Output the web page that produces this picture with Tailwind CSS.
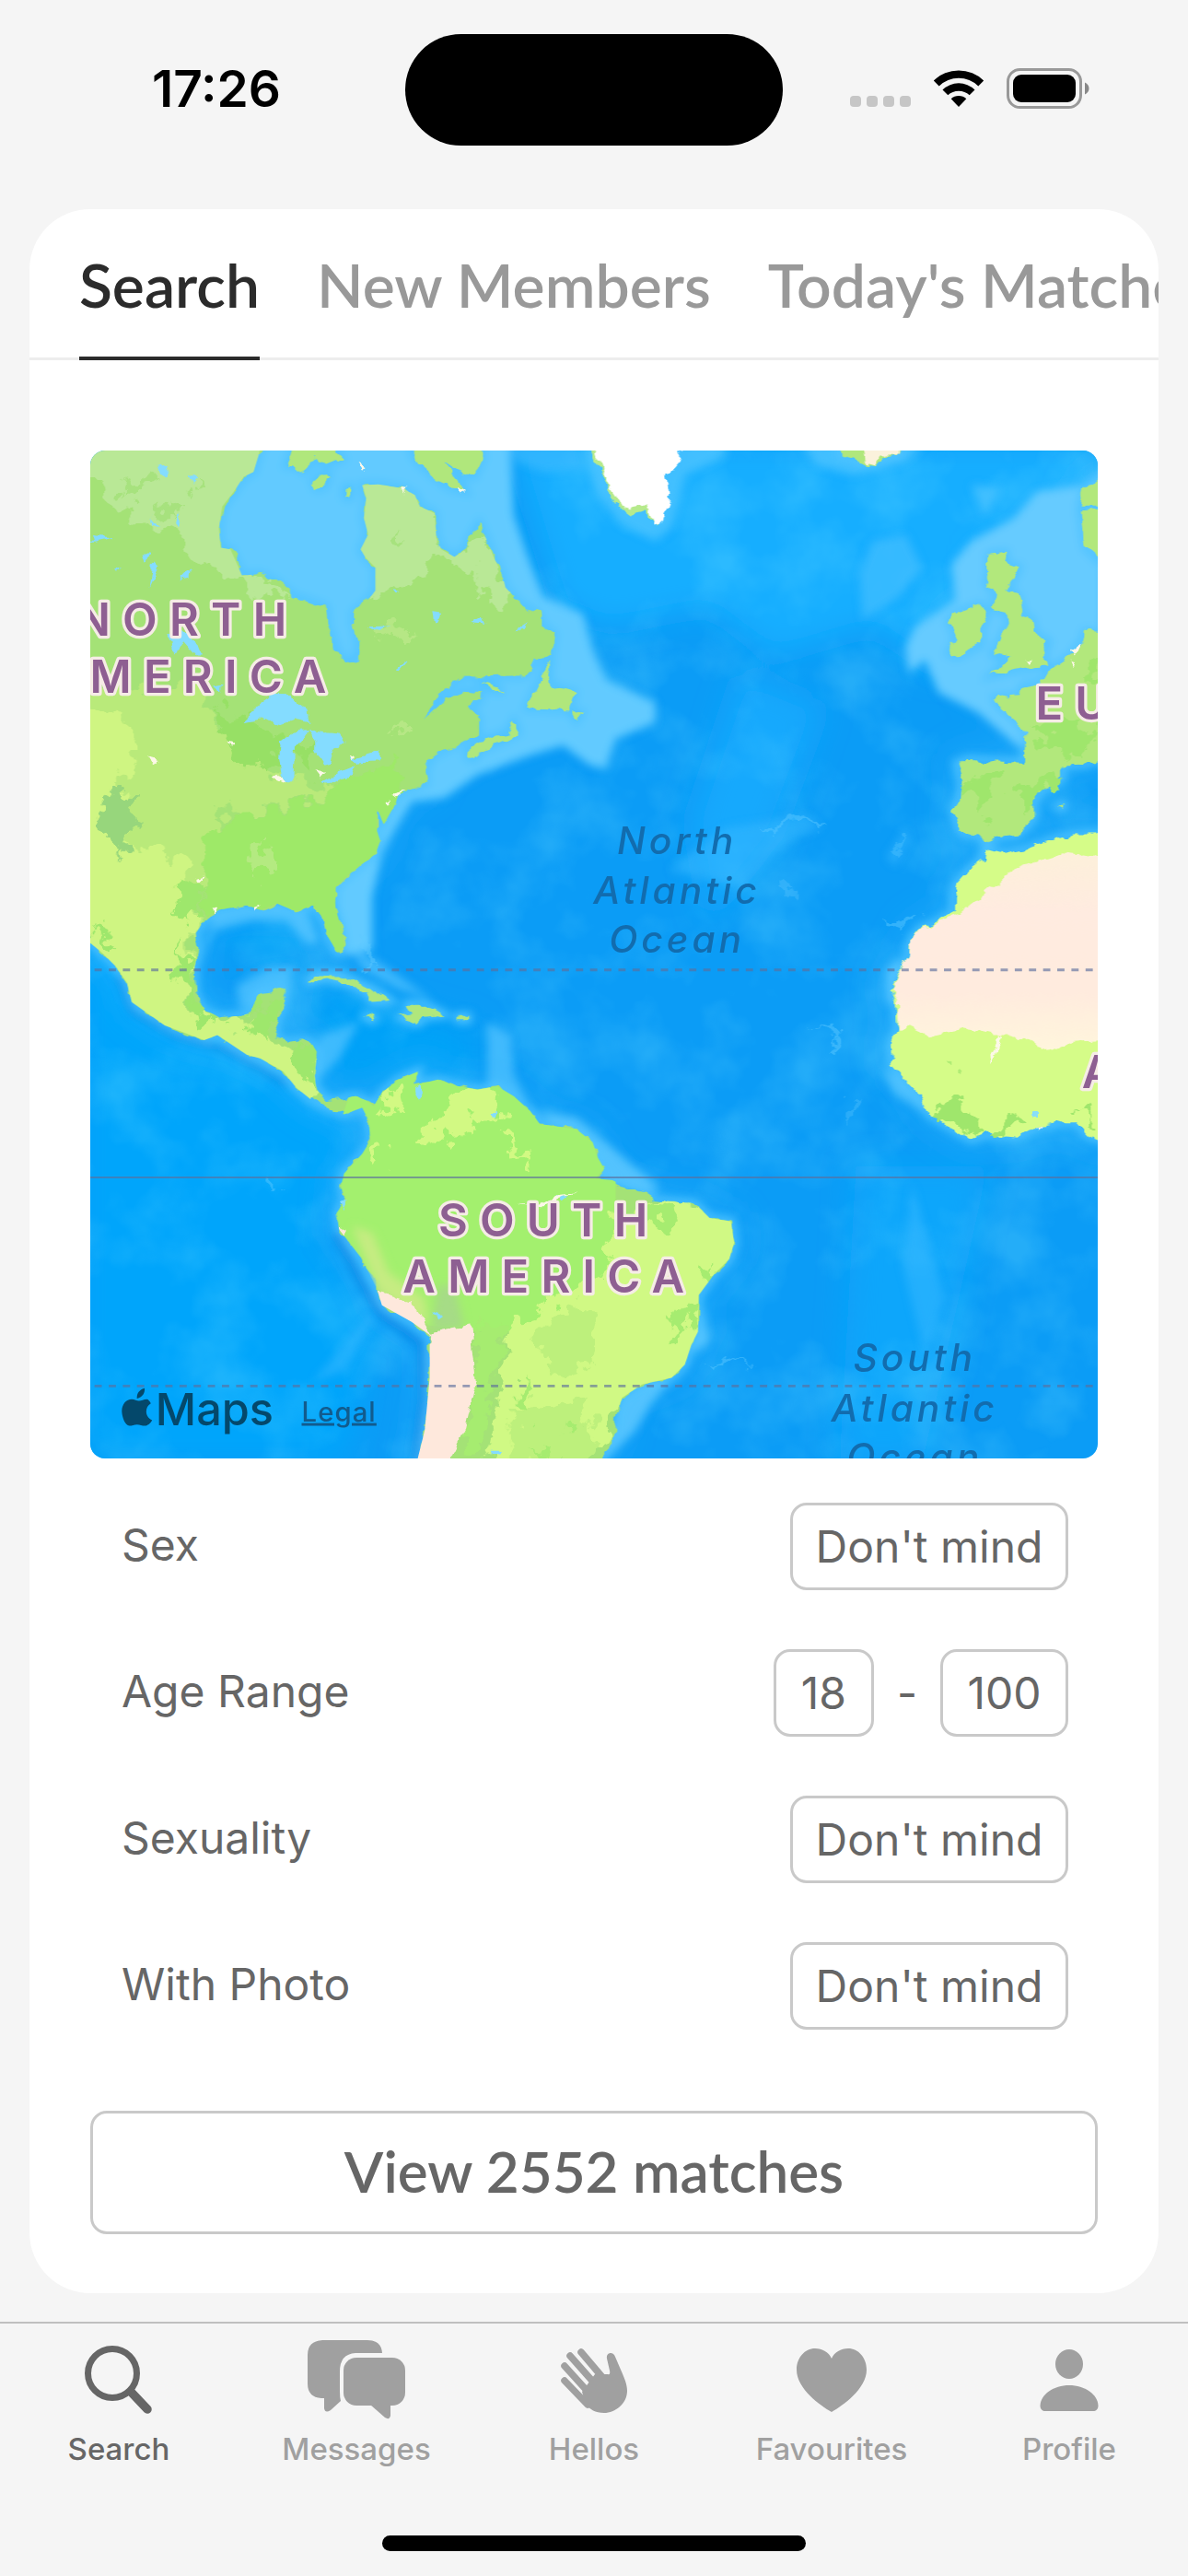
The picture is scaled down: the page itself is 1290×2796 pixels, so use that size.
<!DOCTYPE html>
<html lang="en">
<head>
  <meta charset="UTF-8" />
  <meta name="viewport" content="width=device-width, initial-scale=1.0" />
  <title>Search</title>
  <script src="https://cdn.jsdelivr.net/npm/@tailwindcss/browser@4"></script>
</head>
<body class="bg-[#f5f5f5] min-h-screen flex flex-col font-['Inter',sans-serif] text-[#666]">

  <!-- Status bar -->
  <header class="grid grid-cols-3 items-center pt-[37px] h-[158px] shrink-0">
    <div class="text-[55px] leading-[64px] font-semibold text-black text-center pb-[4px] pl-[40px]">17:26</div>
    <div class="w-[410px] h-[121px] rounded-full bg-black justify-self-center"></div>
    <div class="flex items-center justify-end gap-[24px] pr-[106px] pb-[4px]">
      <div class="flex gap-[6px] pt-[28px]">
        <span class="size-[12px] rounded-[4px] bg-[#c6c6c6]"></span>
        <span class="size-[12px] rounded-[4px] bg-[#c6c6c6]"></span>
        <span class="size-[12px] rounded-[4px] bg-[#c6c6c6]"></span>
        <span class="size-[12px] rounded-[4px] bg-[#c6c6c6]"></span>
      </div>
      <svg class="w-[56px] h-[42px]" viewBox="0 0 56 42">
        <path d="M.8 12.5a39 39 0 0 1 54.4 0L49.3 18.5a30.500 30.500 0 0 0-42.600 0z" />
        <path d="M10.500 22.500a25 25 0 0 1 35 0L39.700 28.300a17 17 0 0 0-23.400 0z" />
        <path d="M19.700 32.300a12 12 0 0 1 16.600 0L28 41z" />
      </svg>
      <svg class="w-[91px] h-[44px]" viewBox="0 0 91 44">
        <rect x="1.500" y="1.500" width="79" height="41" rx="13" fill="none" stroke="#999" stroke-width="3" />
        <rect x="7" y="7" width="68" height="30" rx="9" />
        <path d="M85 15.500c3 1.500 4.500 3.500 4.500 6.500s-1.500 5-4.500 6.500z" fill="#888" />
      </svg>
    </div>
  </header>

  <main class="mx-[32px] mt-[69px] bg-white rounded-[66px] overflow-hidden">
    <nav class="flex gap-[62px] px-[54px] h-[164px] border-b-[3px] border-[#ededed] font-['Lato',sans-serif] text-[66px] font-semibold text-[#999] whitespace-nowrap">
      <a href="#" class="h-[164px] pt-[44px] leading-[76px] border-b-[4px] border-[#2b2b2b] text-[#2b2b2b]">Search</a>
      <a href="#" class="pt-[44px] leading-[76px]">New Members</a>
      <a href="#" class="pt-[44px] leading-[76px]">Today's Matches</a>
    </nav>

    <div class="px-[66px] pt-[98px] pb-[64px]">
      <svg class="w-full rounded-[16px]" viewBox="24 25 3060 3060" role="img" aria-label="Map">
        <defs>
          <filter id="rough" x="-5%" y="-5%" width="110%" height="110%">
            <feTurbulence type="fractalNoise" baseFrequency="0.022" numOctaves="3" seed="4" />
            <feDisplacementMap in="SourceGraphic" scale="34" xChannelSelector="R" yChannelSelector="G" />
          </filter>
          <filter id="ragged" x="-20%" y="-20%" width="140%" height="140%">
            <feTurbulence type="fractalNoise" baseFrequency="0.016" numOctaves="4" seed="9" />
            <feDisplacementMap in="SourceGraphic" scale="130" xChannelSelector="R" yChannelSelector="G" />
          </filter>
          <filter id="soft" x="-20%" y="-20%" width="140%" height="140%"><feGaussianBlur stdDeviation="14" /></filter>
          <filter id="haze" x="-30%" y="-30%" width="160%" height="160%"><feGaussianBlur stdDeviation="45" /></filter>
          <!-- pale ridges on the sea floor -->
          <filter id="floor" x="0" y="0" width="100%" height="100%">
            <feTurbulence type="fractalNoise" baseFrequency="0.004" numOctaves="4" seed="21" />
            <feColorMatrix values="0 0 0 0 .15  0 0 0 0 .72  0 0 0 0 1  2.6 0 0 0 -1.15" />
          </filter>
          <linearGradient id="desert" x1="0" y1="0" x2="0" y2="1">
            <stop offset="0" stop-color="#fdf0da" /><stop offset=".3" stop-color="#ffebe0" />
            <stop offset=".7" stop-color="#ffebde" /><stop offset="1" stop-color="#fff6dc" />
          </linearGradient>
          <path id="americas" d="M0 0H545L535 40 520 90 490 105 460 150 425 195 415 260 420 320 450 325 470 370 485 405 540 400 590 425 640 465 740 500 745 560 770 630 795 668 835 655 840 600 825 550 825 515 860 490 890 450 890 380 860 350 845 325 868 280 855 230 862 170 850 130 900 128 975 140 1010 160 1025 195 1070 215 1075 290 1090 325 1130 348 1165 325 1180 285 1205 245 1230 300 1250 350 1275 400 1285 440 1330 490 1385 520 1395 555 1432 580 1425 640 1380 665 1340 708 1150 712 1080 765 1040 838 1100 785 1160 752 1210 755 1208 785 1175 800 1205 840 1205 880 1150 910 1060 955 1040 1000 1045 1035 960 1070 950 1100 915 1160 895 1110 895 1180 905 1210 890 1250 850 1280 800 1320 770 1350 768 1410 785 1470 795 1530 775 1550 745 1500 735 1450 700 1405 650 1425 590 1400 540 1420 500 1405 410 1420 375 1445 345 1490 350 1540 340 1600 345 1680 375 1730 430 1748 510 1735 535 1670 620 1658 605 1720 580 1810 620 1820 690 1815 712 1850 705 1925 710 1965 750 2000 830 1985 865 2000 885 2015 910 1975 960 1935 1020 1910 1005 1950 1035 1945 1080 1935 1140 1955 1200 1965 1260 1955 1310 1985 1360 2030 1390 2070 1500 2085 1550 2125 1565 2170 1585 2205 1560 2235 1610 2240 1650 2260 1720 2280 1735 2300 1860 2310 1905 2355 1970 2365 1980 2430 1965 2480 1920 2525 1890 2565 1872 2590 1870 2700 1850 2740 1830 2800 1790 2840 1700 2860 1640 2900 1622 2950 1620 3000 1570 3100H1015L1040 3000 1055 2840 1055 2710 1000 2670 910 2620 895 2570 850 2480 780 2390 772 2340 800 2300 785 2260 795 2220 850 2160 875 2120 870 2060 850 2020 795 2040 700 2000 650 1960 610 1910 540 1870 500 1860 410 1800 370 1815 250 1770 150 1700 135 1640 100 1590 60 1550 0 1500z" />
          <path id="africa" d="M2740 1235 2735 1265 2700 1290 2655 1340 2645 1380 2645 1430 2580 1465 2545 1475 2510 1530 2508 1565 2475 1615 2450 1660 2470 1700 2475 1780 2455 1830 2460 1890 2505 1940 2550 1990 2570 2040 2650 2090 2700 2118 2750 2100 2840 2108 2890 2080 2970 2065 3020 2065 3050 2100 3100 2120V1190H3010L2940 1210 2870 1235 2800 1250z" />
          <path id="europe" d="M2655 975 2690 962 2860 970 2865 890 2840 850 2780 800 2770 775 2850 770 2855 740 2920 725 2940 690 3000 650 3040 600 3045 575 3100 580V960L3040 978 2975 980V1020L2920 1050 2890 1080V1140L2840 1190 2790 1195 2745 1215 2720 1190 2670 1185 2648 1120 2665 1080 2670 1030zM2755 340 2805 335 2800 370 2845 380 2810 450 2840 465 2855 520 2885 540 2890 580 2935 605 2920 640 2925 680 2840 690 2760 708 2815 655 2765 645 2795 585 2815 550 2810 515 2765 505 2775 455 2745 430 2755 400zM2670 510 2730 492 2745 530 2730 560V615L2655 652 2630 640 2655 600 2630 540zM3100 90 3040 140 3030 195H3100zM3030 210 3100 205V370L3045 320z" />
          <path id="isles" d="M1000 0V30L1020 60 1060 95 1110 135 1165 150 1150 120 1095 55 1140 85 1190 105 1215 50 1210 0zM620 70 640 20H760L790 50 740 68 715 50 670 88 650 70zM700 120 720 100 748 98 735 135 710 140zM798 135 815 135 812 170 797 165zM1425 655 1400 700 1370 760 1350 808 1480 815 1495 760 1430 740 1415 710zM1485 820H1515L1500 845zM1170 935 1210 905 1290 880 1310 845 1325 880 1280 905 1210 935 1190 965 1168 955zM1212 728 1240 732 1277 757 1240 750zM682 1642 710 1615 780 1615 850 1645 900 1670 937 1695 880 1700 860 1668 800 1640 740 1626zM955 1745 1000 1740 985 1705 1040 1705 1100 1738 1040 1745 1020 1765zM850 1740 888 1745 880 1756zM1142 1742H1172V1754H1142zM2300 40 2340 50 2370 65 2410 70 2440 45 2480 40 2490 0H2300zM2965 1105 2980 1098 2978 1112z" />
        </defs>

        <!-- ocean -->
        <rect width="3100" height="3100" fill="#0b9cf6" />
        <g filter="url(#haze)">
          <path d="M1300 0H3100V500L2600 700 2400 560 2100 650 1900 500 1600 560 1450 500z" fill="#12aeff" />
          <path d="M2000 700 2250 800 2100 1200 1900 1450 1850 1150z" fill="#13a9fd" />
          <path d="M0 1500 600 1900 850 2100 700 2400 900 2700 800 3100H0z" fill="#06a5fb" />
          <path d="M2350 2200 2750 2200 2550 3100H2300z" fill="#10a6fb" />
          <path d="M700 1640 1200 1780 1200 1930 740 1950zM380 1480 700 1450 600 1600z" fill="#04a2f8" />
        </g>
        <rect x="0" y="0" width="3100" height="3100" filter="url(#floor)" opacity=".26" />

        <!-- shallow water along the coasts -->
        <g filter="url(#haze)" fill="none" stroke="#3bbcff" stroke-width="60" stroke-opacity=".45">
          <use href="#americas" /><use href="#africa" /><use href="#europe" />
        </g>
        <g filter="url(#soft)">
          <path d="M360 0H1300L1310 220 1350 340 1400 470 1520 520 1550 630 1590 720 1740 790 1740 850 1620 900 1590 990 1540 980 1460 920 1360 950 1200 1010 1100 1080 1000 1090 940 1190 910 1250 880 1380 880 1540 800 1560 740 1340 1000 900 400 400z" fill="#62caff" />
          <path d="M1290 0H1500L1530 80 1400 90 1320 60z" fill="#3fbdff" opacity=".6" />
          <path d="M3100 120 2900 150 2830 230 2700 300 2640 370 2650 480 2530 560 2500 620 2510 700 2560 660 2600 760 2720 820 2850 930 2900 900 3100 620z" fill="#66cbff" />
          <path d="M2400 300 2500 280 2550 380 2480 470 2370 540 2360 400z" fill="#4cc2ff" opacity=".6" />
          <path d="M1520 0 1560 150 1640 250 1740 300 1790 260 1830 100 1950 40V0zM2180 0 2230 70 2340 100 2500 60 2560 0zM2700 130 2790 140 2740 220z" fill="#50c4ff" opacity=".75" />
          <path d="M690 1960 720 1800 840 1760 780 1870zM480 1720 470 1650 560 1600 640 1590 620 1690zM820 1540 890 1570 1060 1690 960 1660 850 1600zM1230 1760 1300 1800 1310 1920 1350 2000 1230 1990z" fill="#55c5ff" opacity=".7" />
          <path d="M1380 2030 1500 2050 1560 2100 1760 2270 1600 2260 1500 2120zM1880 2620 1905 2730 1850 2770zM1830 2810 1740 2900 1680 3000 1580 3100H1560L1640 2900z" fill="#62caff" opacity=".8" />
          <path d="M2440 1600 2480 1560V1720L2440 1700zM2430 1900 2560 1970 2560 2040 2460 1970z" fill="#58c6ff" opacity=".8" />
          <path d="M400 1430 560 1400 680 1420 720 1520 680 1520 620 1450 520 1450 400 1480 350 1600z" fill="#58c6ff" opacity=".8" />
          <g fill="none" stroke="#50c3ff" stroke-width="22">
            <use href="#americas" /><use href="#africa" /><use href="#europe" /><use href="#isles" />
          </g>
          <path d="M770 2400 850 2560 910 2650 1030 2740 1035 2900 1010 3100" fill="none" stroke="#0a80e0" stroke-width="20" opacity=".7" />
          <path d="M110 1620 150 1725 280 1800 450 1850 620 1950" fill="none" stroke="#0a80e0" stroke-width="16" opacity=".6" />
        </g>
        <!-- reefs and sea mounts -->
        <g filter="url(#soft)" fill="#3ab9ff" opacity=".5">
          <path d="M1950 1170 2200 1130 2250 1170 2150 1210 2000 1350 1780 1300zM2440 1260 2500 1170 2520 1200 2470 1290zM700 2850 860 2660 890 2650 800 2820zM2520 2250 2620 2600 2560 2780 2490 2500z" />
        </g>
        <g filter="url(#ragged)" fill="#5fc9ff" opacity=".45">
          <path d="M830 1500 850 1490 880 1540 910 1590 880 1600zM2210 1770 2300 1790 2290 1830 2260 1835 2280 1800zM2040 1170 2180 1140 2260 1170 2180 1165zM2430 1460H2480L2560 1430 2490 1480zM560 2230 600 2250 570 2265zM1900 2770 2060 2790 1950 2795z" />
          <path d="M2140 1340 2190 1330 2150 1390zM2460 1220 2510 1180 2480 1260zM2320 2010 2360 1990 2340 2080z" opacity=".7" />
        </g>

        <!-- land -->
        <g filter="url(#rough)">
          <use href="#americas" fill="#a4e276" />
          <use href="#isles" fill="#b0e77c" />
          <use href="#africa" fill="#d5fc88" />
          <use href="#europe" fill="#b2e87c" />
          <path d="M1535 0 1560 70 1590 120 1610 165 1635 200 1665 222 1710 205 1720 235 1745 250 1760 200V0z" fill="#b6ea8c" />
          <path d="M1550 0 1570 70 1600 130 1625 165 1645 200 1670 205 1710 185 1722 215 1735 250 1760 240 1775 200 1785 150 1775 100 1810 60 1835 0z" fill="#fff" />
          <path d="M2370 0 2380 60 2410 68 2425 40 2480 40V0z" fill="#fbf2dc" />
          <path d="M2750 1360 2700 1400 2650 1440 2580 1468 2545 1478 2512 1530 2508 1565 2477 1615 2455 1660 2475 1700 2477 1778 2510 1775 2560 1800 2680 1780 2770 1800 2840 1800 2930 1850 3010 1820 3100 1815V1260L2980 1245 2900 1270 2820 1300z" fill="url(#desert)" />
        </g>

        <clipPath id="onland"><use href="#americas" /></clipPath>
        <g clip-path="url(#onland)">
          <g filter="url(#ragged)">
            <path d="M-60 -60H600L480 330 560 420 660 490 420 400 300 300 120 210 60 120H-60z" fill="#b9e896" />
            <path d="M800 80 1120 180 1080 330 1230 280 1320 450 1240 500 1160 360 1040 360 1000 430 860 460 820 330z" fill="#b9e896" />
            <path d="M-60 740H380L400 860 520 980 760 1050 620 1110 400 1130 360 1400 330 1600H-60z" fill="#b9ea7a" />
            <path d="M-60 840 140 830 160 940 120 1040 150 1230 320 1260 300 1400 340 1420 320 1600 320 1700 400 1760 520 1750 700 1900 700 2080 -60 1800z" fill="#cff582" />
            <path d="M480 1120 620 1120 760 1050 960 960 980 1240 860 1340 860 1600 700 1500 380 1450 370 1200z" fill="#9ee968" />
          </g>
          <path d="M840 1890H1620V2700H1180L1050 2680 740 2400V2200z" fill="#a3f06e" />
          <g filter="url(#soft)">
            <path d="M820 2380 880 2400 930 2520 1040 2600 1050 2680 900 2580z" fill="#c6ec82" />
            <path d="M1080 2560H1130L1160 2690 1060 2700z" fill="#a6dc86" />
          </g>
          <g filter="url(#ragged)">
            <path d="M1110 1990 1190 1940 1280 2010 1270 2060 1180 2060 1120 2130 1030 2130 1060 2060zM900 2000 960 1950 970 2010 920 2040zM900 2130 930 2130 910 2200 880 2210zM1290 2110 1330 2130 1340 2190 1300 2160z" fill="#d2f983" />
            <path d="M1620 2350 1800 2300 1980 2330 2040 2450 1940 2570 1930 2720 1870 2880 1650 2900 1560 3040 1300 3140H1220L1290 2800 1300 2660 1420 2620 1540 2560 1600 2480z" fill="#d0f984" />
            <path d="M1400 2660 1520 2620 1560 2800 1450 2840 1380 2760zM1300 2930 1540 2900 1560 3100H1300z" fill="#bdf07c" />
            <path d="M1740 2320 1800 2330 1780 2400 1720 2370zM1870 2500 1930 2480 1900 2540zM1790 2650 1870 2600V2680L1810 2720zM1210 2680 1290 2700 1240 2900 1200 3100H1140L1180 2900zM1330 2850 1370 2880 1340 2940zM1480 2950 1530 2980 1470 3020zM1380 3010 1420 3040 1370 3080z" fill="#a6ec70" />
            <path d="M60 1090 150 1060 160 1180 110 1260 50 1160z" fill="#97d67c" />
            <path d="M480 980 560 1000 620 900 400 800 420 880zM640 930 720 900 700 1000z" fill="#97e065" />
            <path d="M300 1340 370 1360 360 1440 300 1450zM40 1460 120 1540 70 1530zM280 1490 350 1680 430 1780 370 1760 290 1600zM500 1760 560 1700 620 1700 560 1820zM640 1830 730 1830 720 1990 680 1930 650 1880z" fill="#9ee76c" />
            <path d="M870 560 960 610 1000 590 920 540zM500 1290 560 1190 570 1270 520 1330zM930 880 1010 860 980 910z" fill="#bdea8c" opacity=".7" />
            <path d="M340 100 390 150 360 170zM140 90 200 110 130 170zM240 180 300 200 270 250zM950 270 1000 280 970 310z" fill="#9fe074" opacity=".7" />
          </g>
          <g filter="url(#rough)">
            <path d="M1060 2705 1180 2680 1195 2850 1160 3000 1110 3100H1000L1035 2900zM900 2580 1000 2610 1060 2710 980 2680 880 2620zM765 2370 810 2390 800 2410z" fill="#fee8dc" />
          </g>
        </g>
        <g filter="url(#ragged)" fill="#9fe66c">
          <path d="M2600 2010 2680 2020 2710 2110 2660 2090 2590 2030zM2790 2050 2840 2030 2870 2080 2770 2100zM3010 2030 3060 2020 3070 2070zM2700 1010H2800L2760 1100 2700 1150 2690 1060zM2850 1050 2920 1000 2960 1010 2850 1140zM2890 860 3060 840 3040 960 2950 930zM3040 680 3100 670V740z" />
          <path d="M2620 1880 2660 1870 2650 1900z" opacity=".7" />
        </g>

        <!-- lakes -->
        <g fill="#84dcff" filter="url(#rough)">
          <path d="M490 845 545 795 580 768 630 770 680 810 685 850 640 840 590 858 545 835zM600 910 640 880 690 875 645 930 640 1030 605 1030 595 960zM690 870 780 880 805 920 765 930 755 975 735 980 710 940 710 900zM725 1030 780 1000 830 980 820 1005 740 1038zM810 960 905 938V968L840 972zM260 590 300 570 350 610 365 650 345 650 310 610 285 650 270 620z" />
          <path d="M24 285 90 292 30 305zM225 75 265 65 250 110zM210 225 235 255 215 245zM300 220 290 270 282 255zM182 345 208 345 195 370zM215 365 235 375 205 440zM325 380 322 410 290 418zM98 388 125 380 105 396zM325 100 348 110 335 125zM865 560 940 558 890 572zM1060 515 1095 520 1065 550zM1180 545 1215 528 1225 550zM1320 570 1355 548 1340 572zM955 690 990 665 965 695zM400 740 425 735 425 760zM940 445 965 450 950 458z" />
          <path d="M1005 1965 1030 1955 1035 1985 1020 1995zM1065 2640 1095 2655 1080 2665zM1242 2030 1258 2025 1250 2045zM2892 2025H2902V2050H2892zM1245 3065H1268V3078H1245zM785 2310 810 2300 795 2330zM1435 2285 1475 2290 1455 2305z" />
        </g>
        <!-- cities -->
        <g fill="#fdf8e8" filter="url(#rough)">
          <path d="M945 1065 985 1055 960 1075zM920 1090 940 1080 930 1098zM580 1020 595 1008 612 1035zM705 1000 735 1000 722 1022zM808 955 830 948 820 962zM350 1325 372 1318 355 1335zM392 1410 412 1412 400 1425zM525 1415 545 1408 530 1425zM445 905 462 910 455 920zM200 955 228 962 210 972zM965 140 985 142 975 155zM1145 140 1168 150 1150 158zM845 70 862 78 855 86zM2870 655 2890 655 2882 672zM3000 630 3028 610 3010 650zM3003 665 3017 668 3010 682zM1325 2312 1380 2315 1440 2285 1505 2280 1450 2292 1390 2322zM2755 1865 2780 1810 2795 1800 2775 1850 2760 1885zM2900 2078 2918 2075 2905 2086z" />
        </g>

        <!-- tropics and equator -->
        <g stroke="#5c6f9c" stroke-opacity=".65" stroke-width="8">
          <path d="M37 1602H3084M37 2865H3084" stroke-dasharray="22 21" />
          <path d="M24 2232H3084" stroke-width="6" />
        </g>

        <g class="font-['Inter',sans-serif] font-semibold" font-size="137" letter-spacing="37" fill="#8e5f92" stroke="#f6ece6" stroke-width="18" stroke-linejoin="round" paint-order="stroke">
          <text x="-19" y="587">NORTH</text>
          <text x="-114" y="760">AMERICA</text>
          <text x="1081" y="2410">SOUTH</text>
          <text x="973" y="2582">AMERICA</text>
          <text x="2895" y="843">EUROPE</text>
          <text x="3036" y="1960">AFRICA</text>
        </g>
        <g class="font-['Inter',sans-serif] font-medium italic" font-size="114" letter-spacing="11" fill="#126cae" text-anchor="middle">
          <text x="1806" y="1250">North</text>
          <text x="1806" y="1400">Atlantic</text>
          <text x="1806" y="1550">Ocean</text>
          <text x="2528" y="2820">South</text>
          <text x="2528" y="2972">Atlantic</text>
          <text x="2528" y="3122">Ocean</text>
        </g>

        <g fill="#04486b">
          <path d="M189 2872c2 16-9 28-23 31-2-15 9-28 23-31zM208 2918c-20 12-18 42 4 51-5 10-15 17-22 17-9 0-15-4-24-4s-15 4-23 4c-14-2-22-26-23-43-1-22 13-38 30-38 9 0 15 5 22 5s14-5 24-5c4 0 9 6 12 13z" />
          <text class="font-['Inter',sans-serif] font-medium" x="222" y="2985" font-size="136">Maps</text>
        </g>
        <a href="#"><text class="font-['Inter',sans-serif] font-medium underline" x="666" y="2972" font-size="82" letter-spacing="3" fill="#125b8d">Legal</text></a>
      </svg>

      <form class="pt-[48px]">
        <div class="flex flex-col gap-[64px] pl-[34px] pr-[32px] text-[48px] leading-[60px]">
          <div class="flex items-center justify-between h-[95px]">
            <label for="sex" class="pb-[4px]">Sex</label>
            <select id="sex" class="appearance-none w-[302px] h-[95px] border-[3px] border-[#c9c9c9] rounded-[18px] bg-white text-center">
              <option>Don't mind</option><option>Male</option><option>Female</option>
            </select>
          </div>
          <div class="flex items-center justify-between h-[95px]">
            <label for="age-from" class="pb-[4px]">Age Range</label>
            <div class="flex items-center gap-[25px]">
              <input id="age-from" type="text" inputmode="numeric" value="18" class="w-[109px] h-[95px] border-[3px] border-[#c9c9c9] rounded-[18px] text-center" />
              <span>-</span>
              <input id="age-to" type="text" inputmode="numeric" value="100" aria-label="Maximum age" class="w-[139px] h-[95px] border-[3px] border-[#c9c9c9] rounded-[18px] text-center" />
            </div>
          </div>
          <div class="flex items-center justify-between h-[95px]">
            <label for="sexuality" class="pb-[4px]">Sexuality</label>
            <select id="sexuality" class="appearance-none w-[302px] h-[95px] border-[3px] border-[#c9c9c9] rounded-[18px] bg-white text-center">
              <option>Don't mind</option><option>Straight</option><option>Gay</option>
            </select>
          </div>
          <div class="flex items-center justify-between h-[95px]">
            <label for="photo" class="pb-[4px]">With Photo</label>
            <select id="photo" class="appearance-none w-[302px] h-[95px] border-[3px] border-[#c9c9c9] rounded-[18px] bg-white text-center">
              <option>Don't mind</option><option>Yes</option><option>No</option>
            </select>
          </div>
        </div>
        <button type="submit" class="mt-[88px] w-full h-[134px] border-[3px] border-[#c9c9c9] rounded-[18px] pb-[4px] font-['Lato',sans-serif] font-semibold text-[62px]">View 2552 matches</button>
      </form>
    </div>
  </main>

  <!-- Tab bar -->
  <footer class="mt-[31px] border-t-[2px] border-[#bfbfbf]">
    <nav class="grid grid-cols-5 pt-[16px] text-[33px] leading-[40px] font-medium text-[#a0a0a0]">
      <a href="#" class="flex flex-col items-center gap-[12px] text-[#666]">
        <svg class="w-[110px] h-[88px]" viewBox="0 0 110 88" fill="none" stroke="currentColor">
          <circle cx="48" cy="38" r="26.500" stroke-width="7" />
          <path d="M68 58 86 77" stroke-width="9.500" stroke-linecap="round" />
        </svg>
        Search
      </a>
      <a href="#" class="flex flex-col items-center gap-[12px]">
        <svg class="w-[110px] h-[88px]" viewBox="0 0 110 88" fill="currentColor">
          <path d="M18 2H67Q82 2 83 16H54Q37 17 37 36V58Q37 64 38 68L27 78Q21 82 20 76V65H17Q2 64 2 49V18Q2 3 18 2z" />
          <rect x="41" y="21" width="67" height="52" rx="14" />
          <path d="M70 72 86 86Q91 89 92 84V72z" />
        </svg>
        Messages
      </a>
      <a href="#" class="flex flex-col items-center gap-[12px]">
        <svg class="w-[110px] h-[88px]" viewBox="0 0 110 88">
          <path d="M23 46 48 72M23 30 52 62M29 19 60 54M41 15 69 48" fill="none" stroke="currentColor" stroke-width="7.500" stroke-linecap="round" />
          <path d="M42 58 56 39 70 39Q73 40 72 35L69 22C68 15 76 14 78 20L84 34C88 43 91 50 91 57 91 71 78 81 66 81 56 81 51 77 46 72z" fill="currentColor" />
        </svg>
        Hellos
      </a>
      <a href="#" class="flex flex-col items-center gap-[12px]">
        <svg class="w-[110px] h-[88px]" viewBox="0 0 110 88" fill="currentColor">
          <path d="M55 80C43 73 17 55 17 34 17 21 26 11 37 11 45 11 52 15 55 22 58 15 65 11 73 11 84 11 93 21 93 34 93 55 67 73 55 80z" />
        </svg>
        Favourites
      </a>
      <a href="#" class="flex flex-col items-center gap-[12px]">
        <svg class="w-[110px] h-[88px]" viewBox="0 0 110 88" fill="currentColor">
          <ellipse cx="55" cy="28" rx="15" ry="16" />
          <path d="M55 51C72 51 86 61 86.500 73 86.500 77 84 79 81 79H29C26 79 23.500 77 23.500 73 24 61 38 51 55 51z" />
        </svg>
        Profile
      </a>
    </nav>
    <div class="mx-auto mt-[74px] mb-[26px] w-[460px] h-[17px] rounded-full bg-black"></div>
  </footer>
</body>
</html>
